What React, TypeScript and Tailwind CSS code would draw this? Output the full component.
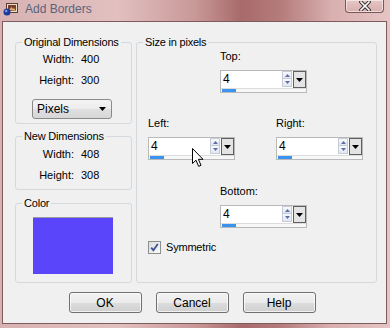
const FONT = "font-['Liberation_Sans',Arial,sans-serif]";

function TitleIcon() {
  return (
    <svg width="15" height="13" viewBox="0 0 15 13" className="mt-[3px]">
      <rect x="3.5" y="0.5" width="11" height="9" fill="#e9dccb" stroke="#5a4030" />
      <rect x="5" y="2" width="8" height="6" fill="#7a3e2e" />
      <path d="M6 7 L8.5 4 L10 6 L11 5 L13 8 Z" fill="#d9b070" />
      <circle cx="4" cy="9" r="3.5" fill="#1c3a9c" />
      <circle cx="3.2" cy="8" r="1.2" fill="#7f9fe8" />
    </svg>
  );
}

function CloseButton() {
  return (
    <div className="mr-[6px] flex h-[13px] w-[39px] items-center justify-center rounded-b-[4px] border border-t-0 border-[#7a5658] bg-gradient-to-b from-[#e7c6c6] to-[#d9aeae] shadow-[inset_0_0_0_1px_rgba(255,255,255,0.55)]">
      <svg width="12" height="10" viewBox="0 0 12 10">
        <path d="M2 1 L10 9 M10 1 L2 9" stroke="#3c3232" strokeWidth="3.6" strokeLinecap="square" />
        <path d="M2 1 L10 9 M10 1 L2 9" stroke="#ffffff" strokeWidth="1.6" strokeLinecap="square" />
      </svg>
    </div>
  );
}

function DownTriangle({ color = '#000' }: { color?: string }) {
  return (
    <svg width="7" height="4" viewBox="0 0 7 4">
      <path d="M0 0 H7 L3.5 4 Z" fill={color} />
    </svg>
  );
}

function Spin({ value, cursor }: { value: string; cursor?: boolean }) {
  return (
    <div className="relative h-[23px] w-[87px] border border-[#b9b9b9] bg-white">
      <div className="flex h-[17px]">
        <div className="flex-1 pl-[2px] text-[12px] leading-[17px] text-black">{value}</div>
        <div className="mr-[1px] flex w-[10px] flex-col">
          <div className="flex h-[8px] items-center justify-center border border-[#c4cad8] bg-gradient-to-b from-[#f8f9fc] to-[#e3e7f0]">
            <svg width="5" height="3" viewBox="0 0 5 3"><path d="M0 3 L2.5 0 L5 3 Z" fill="#5b6ea8" /></svg>
          </div>
          <div className="flex h-[8px] items-center justify-center border border-t-0 border-[#c4cad8] bg-gradient-to-b from-[#f8f9fc] to-[#e3e7f0]">
            <svg width="5" height="3" viewBox="0 0 5 3"><path d="M0 0 L5 0 L2.5 3 Z" fill="#5b6ea8" /></svg>
          </div>
        </div>
        <div className="flex w-[13px] items-center justify-center border border-[#5f5f5f] bg-[#e4e4e4]">
          <DownTriangle />
        </div>
      </div>
      <div className="h-[4px] border-t border-[#dcdcdc] bg-[#f7f7f7] pl-[1px]">
        <div className="h-[3px] w-[14px] bg-[#3a93ee]" />
      </div>
      {cursor && (
        <svg width="13" height="20" viewBox="0 0 13 20" className="absolute left-[43px] top-[10px]">
          <path d="M0.5 0.5 L0.5 15.5 L4 12.2 L6.6 18.3 L9 17.3 L6.4 11.3 L11 11.3 Z" fill="#ffffff" stroke="#000000" strokeWidth="1" />
        </svg>
      )}
    </div>
  );
}

function Group({ title, className, children }: { title: string; className?: string; children: React.ReactNode }) {
  return (
    <fieldset className={`rounded-[3px] border border-[#d3d9dd] ${className ?? ''}`}>
      <legend className="ml-[6px] px-[2px] text-[11px] leading-[12px] tracking-[-0.2px] text-black">{title}</legend>
      {children}
    </fieldset>
  );
}

function DimRow({ label, value, className }: { label: string; value: string; className?: string }) {
  return (
    <div className={`flex text-[11px] leading-[14px] text-black ${className ?? ''}`}>
      <span className="w-[58px] text-right">{label}</span>
      <span className="ml-[7px]">{value}</span>
    </div>
  );
}

function Button({ label }: { label: string }) {
  return (
    <div className="flex h-[21px] w-[73px] items-center justify-center rounded-[3px] border border-[#707070] bg-[linear-gradient(#f2f2f2_0%,#ebebeb_50%,#dddddd_51%,#cfcfcf_100%)] text-[12px] text-black shadow-[inset_0_0_0_1px_rgba(255,255,255,0.7)]">
      {label}
    </div>
  );
}

export default function App() {
  return (
    <div className={`${FONT} h-[328px] w-[390px] overflow-hidden bg-[linear-gradient(90deg,#d8b2b2_0%,#e2c0c0_30%,#c99898_50%,#a86a6a_62%,#b57c7c_72%,#d9afaf_85%,#e6c4c4_100%)] pl-[2px] pr-[3px]`}>
      {/* Title bar */}
      <div className="flex h-[21px] items-start">
        <div className="ml-[1px]"><TitleIcon /></div>
        <span className="ml-[7px] mt-[2px] text-[12px] leading-[14px] text-[#58647a]">Add Borders</span>
        <div className="flex-1" />
        <div className="-mr-[3px]"><CloseButton /></div>
      </div>

      {/* Client area */}
      <div className="h-[303px] border border-[#7d5a5c] bg-[#f0f0f0]">
        <div className="flex gap-[4px] pl-[12px] pt-[14px]">
          {/* Left column */}
          <div className="flex w-[117px] flex-col">
            <Group title="Original Dimensions" className="h-[88px]">
              <DimRow label="Width:" value="400" className="mt-[4px]" />
              <DimRow label="Height:" value="300" className="mt-[7px]" />
              <div className="ml-[16px] mt-[12px] flex h-[20px] w-[80px] items-center justify-between rounded-[3px] border border-[#8a8a8a] bg-[linear-gradient(#f4f4f4_0%,#ececec_50%,#e0e0e0_51%,#d6d6d6_100%)] pl-[4px] pr-[5px] text-[12px] text-black">
                <span>Pixels</span>
                <DownTriangle />
              </div>
            </Group>
            <Group title="New Dimensions" className="mt-[6px] h-[60px]">
              <DimRow label="Width:" value="408" className="mt-[5px]" />
              <DimRow label="Height:" value="308" className="mt-[7px]" />
            </Group>
            <Group title="Color" className="mt-[7px] h-[86px]">
              <div className="ml-[17px] mt-[8px] h-[57px] w-[80px] border-t border-[#9a9a9a] bg-[#5b45fb]" />
            </Group>
          </div>

          {/* Right column */}
          <Group title="Size in pixels" className="h-[247px] w-[241px]">
            <div className="px-[11px]">
              <div className="ml-[72px] mt-[1px]">
                <div className="text-[11px] leading-[14px] text-black">Top:</div>
                <div className="mt-[7px]"><Spin value="4" /></div>
              </div>
              <div className="mt-[23px] flex">
                <div>
                  <div className="text-[11px] leading-[14px] text-black">Left:</div>
                  <div className="mt-[7px]"><Spin value="4" cursor /></div>
                </div>
                <div className="ml-[41px]">
                  <div className="text-[11px] leading-[14px] text-black">Right:</div>
                  <div className="mt-[7px]"><Spin value="4" /></div>
                </div>
              </div>
              <div className="ml-[72px] mt-[24px]">
                <div className="text-[11px] leading-[14px] text-black">Bottom:</div>
                <div className="mt-[7px]"><Spin value="4" /></div>
              </div>
              <div className="mt-[12px] flex items-center">
                <div className="flex h-[13px] w-[13px] items-center justify-center border border-[#8e8f8f] bg-gradient-to-br from-[#dcdcdc] to-[#fbfbfb]">
                  <svg width="9" height="9" viewBox="0 0 9 9">
                    <path d="M1.2 4.6 L3.4 7.2 L7.8 1" stroke="#3d5298" strokeWidth="1.8" fill="none" />
                  </svg>
                </div>
                <span className="ml-[5px] text-[11px] leading-[14px] tracking-[-0.2px] text-black">Symmetric</span>
              </div>
            </div>
          </Group>
        </div>

        {/* Buttons */}
        <div className="mt-[9px] flex justify-center gap-[14px] pr-[5px]">
          <Button label="OK" />
          <Button label="Cancel" />
          <Button label="Help" />
        </div>
      </div>
    </div>
  );
}
